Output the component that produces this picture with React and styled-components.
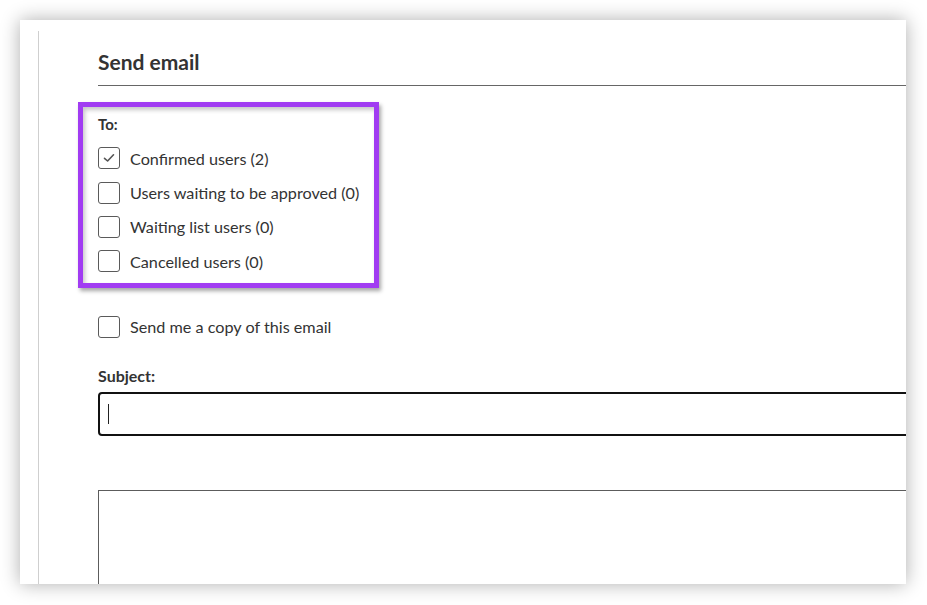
import React from "react";
import styled, { createGlobalStyle } from "styled-components";

const Global = createGlobalStyle`
  html, body { margin: 0; padding: 0; background: #ffffff; }
  body { font-family: Lato, "Open Sans", sans-serif; color: #333333; }
  * { box-sizing: border-box; }
`;

const Page = styled.div`
  width: 927px;
  height: 605px;
  padding: 20px 21px 21px 20px;
  overflow: hidden;
`;

const Card = styled.div`
  width: 886px;
  height: 564px;
  background: #ffffff;
  box-shadow: 0 0 18px rgba(0, 0, 0, 0.32);
  overflow: hidden;
  padding: 11px 0 0 18px;
`;

const Column = styled.div`
  height: 100%;
  border-left: 1px solid #cfcfcf;
  padding-left: 59px;
  width: 1000px;
`;

const Header = styled.h2`
  margin: 0;
  padding: 18px 0 10px;
  font-size: 21px;
  line-height: 26px;
  font-weight: 700;
  color: #333333;
  border-bottom: 1px solid #666666;
`;

const Highlight = styled.div`
  margin: 16px 0 0 -20px;
  width: 301px;
  border: 5px solid #a13cf2;
  padding: 7px 0 4px 15px;
  box-shadow: 2px 3px 4px rgba(0, 0, 0, 0.35), inset 2px 3px 4px rgba(0, 0, 0, 0.22);
`;

const Legend = styled.div`
  font-size: 15px;
  line-height: 20px;
  font-weight: 700;
  margin-bottom: 7px;
`;

const Row = styled.label`
  display: flex;
  align-items: center;
  gap: 10px;
  height: 34.4px;
  font-size: 16.2px;
  color: #333333;
  margin-top: ${(p) => p.$top || 0}px;
`;

const Box = styled.span`
  width: 22px;
  height: 22px;
  flex: none;
  border: 1px solid #5a5a5a;
  border-radius: 3px;
  display: flex;
  align-items: center;
  justify-content: center;
  background: #fff;
`;

const Label = styled.div`
  font-size: 16px;
  line-height: 20px;
  font-weight: 700;
  margin-top: 22px;
`;

const Input = styled.div`
  margin-top: 6px;
  height: 44px;
  border: 2px solid #111111;
  border-radius: 4px;
  display: flex;
  align-items: center;
  padding-left: 8px;
`;

const Caret = styled.span`
  width: 1px;
  height: 20px;
  background: #222;
`;

const TextArea = styled.div`
  margin-top: 54px;
  height: 200px;
  border: 1px solid #5c5c5c;
`;

const Check = () => (
  <svg width="14" height="14" viewBox="0 0 14 14">
    <path d="M2.5 7.3 L5.6 10 L11.5 3.8" fill="none" stroke="#555" strokeWidth="1.6" strokeLinecap="round" strokeLinejoin="round" />
  </svg>
);

const Checkbox = ({ checked, children, top }) => (
  <Row $top={top}>
    <Box>{checked && <Check />}</Box>
    {children}
  </Row>
);

export default function App() {
  return (
    <>
      <Global />
      <Page>
        <Card>
          <Column>
            <Header>Send email</Header>
            <Highlight>
              <Legend>To:</Legend>
              <Checkbox checked>Confirmed users (2)</Checkbox>
              <Checkbox>Users waiting to be approved (0)</Checkbox>
              <Checkbox>Waiting list users (0)</Checkbox>
              <Checkbox>Cancelled users (0)</Checkbox>
            </Highlight>
            <Checkbox top={22}>Send me a copy of this email</Checkbox>
            <Label>Subject:</Label>
            <Input>
              <Caret />
            </Input>
            <TextArea />
          </Column>
        </Card>
      </Page>
    </>
  );
}
